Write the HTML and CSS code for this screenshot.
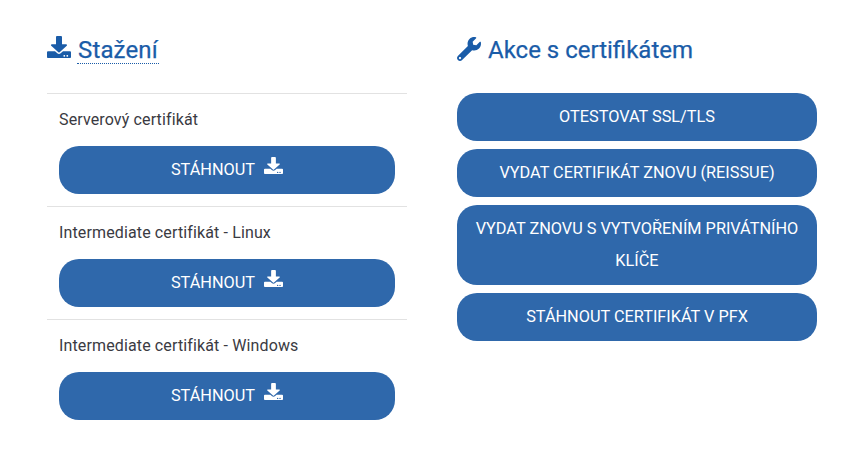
FILE: index.html
```html
<!DOCTYPE html>
<html lang="cs">
<head>
<meta charset="utf-8">
<title>Certifikát</title>
<link rel="stylesheet" href="styles.css">
</head>
<body>
<svg class="defs" aria-hidden="true">
  <symbol id="dl" viewBox="0 0 512 512" preserveAspectRatio="none"><path d="M216 0h80c13.3 0 24 10.7 24 24v168h87.7c17.8 0 26.7 21.5 14.1 34.1L269.7 378.3c-7.5 7.5-19.8 7.5-27.3 0L90.1 226.1c-12.6-12.6-3.7-34.1 14.1-34.1H192V24c0-13.3 10.7-24 24-24zm296 376v112c0 13.3-10.7 24-24 24H24c-13.3 0-24-10.7-24-24V376c0-13.3 10.7-24 24-24h146.7l49 49c20.1 20.1 52.5 20.1 72.6 0l49-49H488c13.3 0 24 10.7 24 24zm-124 88c0-11-9-20-20-20s-20 9-20 20 9 20 20 20 20-9 20-20zm64 0c0-11-9-20-20-20s-20 9-20 20 9 20 20 20 20-9 20-20z"/></symbol>
  <symbol id="wr" viewBox="0 0 512 512"><path d="M507.73 109.1c-2.24-9.03-13.54-12.09-20.12-5.51l-74.36 74.36-67.88-11.31-11.31-67.88 74.36-74.36c6.62-6.62 3.43-17.9-5.66-20.16-47.38-11.74-99.55.91-136.58 37.93-39.64 39.64-50.55 97.1-34.05 147.2L18.74 402.76c-24.99 24.99-24.99 65.51 0 90.5 24.99 24.99 65.51 24.99 90.5 0l213.21-213.21c50.12 16.71 107.47 5.68 147.37-34.22 37.07-37.07 49.7-89.32 37.91-136.73zM64 472c-13.25 0-24-10.75-24-24 0-13.26 10.75-24 24-24s24 10.74 24 24c0 13.25-10.75 24-24 24z"/></symbol>
</svg>
<main class="page">
  <section class="col col-left">
    <h2 class="heading"><svg class="h-icon h-icon-dl"><use href="#dl"/></svg><span class="dotted">Stažení</span></h2>
    <div class="item">
      <p class="label">Serverový certifikát</p>
      <a class="btn" href="#">STÁHNOUT<svg class="b-icon"><use href="#dl"/></svg></a>
    </div>
    <div class="item">
      <p class="label">Intermediate certifikát - Linux</p>
      <a class="btn" href="#">STÁHNOUT<svg class="b-icon"><use href="#dl"/></svg></a>
    </div>
    <div class="item">
      <p class="label">Intermediate certifikát - Windows</p>
      <a class="btn" href="#">STÁHNOUT<svg class="b-icon"><use href="#dl"/></svg></a>
    </div>
  </section>
  <section class="col col-right">
    <h2 class="heading"><svg class="h-icon"><use href="#wr"/></svg><span>Akce s certifikátem</span></h2>
    <div class="actions">
      <a class="btn" href="#">OTESTOVAT SSL/TLS</a>
      <a class="btn" href="#">VYDAT CERTIFIKÁT ZNOVU (REISSUE)</a>
      <a class="btn" href="#">VYDAT ZNOVU S VYTVOŘENÍM PRIVÁTNÍHO KLÍČE</a>
      <a class="btn" href="#">STÁHNOUT CERTIFIKÁT V PFX</a>
    </div>
  </section>
</main>
</body>
</html>
```
FILE: styles.css
```css
* { box-sizing: border-box; }
html, body { margin: 0; background: #fff; }
body { font-family: "Roboto", "Liberation Sans", sans-serif; overflow: hidden; }
.defs { display: none; }
.page { display: flex; gap: 50px; padding: 34px 46px 0 47px; height: 465px; }
.col { width: 360px; }
.heading {
  display: flex;
  align-items: center;
  height: 32px;
  margin: 0 0 27px;
  font-size: 24px;
  font-weight: 400;
  line-height: 32px;
  color: #1a5ca8;
  -webkit-text-stroke: 0.25px #1a5ca8;
}
.h-icon { width: 24px; height: 24px; margin: -3px 7px 0 0; fill: #1a5ca8; flex: none; }
.h-icon-dl { height: 22px; margin: -6px 6px 0 0; }
.dotted { padding: 0 1px; border-bottom: 1px dotted #1a5ca8; letter-spacing: 0.15px; line-height: 26px; margin-top: 1px; }
.item { border-top: 1px solid #e2e2e2; padding: 0 12px 12px; height: 113px; }
.label { margin: 0; height: 52px; padding-top: 16px; font-size: 16px; letter-spacing: 0.13px; line-height: 20px; color: #3a3a42; }
.btn {
  display: block;
  padding: 8px 12px;
  border-radius: 20px;
  background: #2f68ab;
  color: #fff;
  font-size: 16.3px;
  line-height: 32px;
  text-align: center;
  text-decoration: none;
}
.b-icon { width: 19px; height: 17px; margin-left: 9px; fill: #fff; vertical-align: 1px; }
.actions { display: flex; flex-direction: column; gap: 8px; }
```
